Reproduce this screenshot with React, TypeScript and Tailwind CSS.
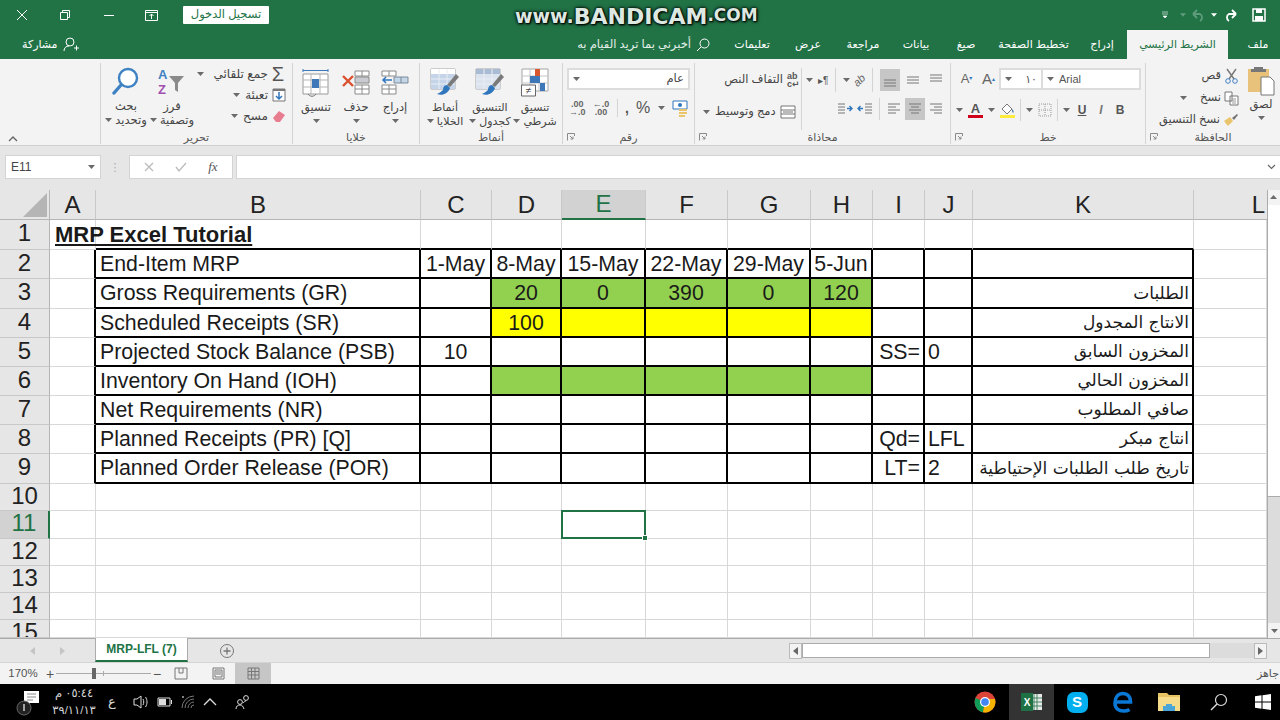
import { ReactNode } from "react";

const ar = "font-['Liberation_Sans','DejaVu_Sans',sans-serif]";

function Caret({ color = "#6a6a6a" }: { color?: string }) {
  return (
    <svg width="7" height="4" viewBox="0 0 7 4" className="shrink-0">
      <path d="M0 0h7L3.5 4z" fill={color} />
    </svg>
  );
}

function Launcher() {
  return (
    <svg width="8" height="8" viewBox="0 0 8 8" className="shrink-0">
      <path d="M0.5 7.5V0.5H7.5V3M3 3l3 3M6 3.5V6H3.5" fill="none" stroke="#8a8a8a" strokeWidth="1" />
    </svg>
  );
}

function Sep() {
  return <div className="w-px self-stretch bg-[#d4d4d4] shrink-0" />;
}

function Group({ width, label, launcher, children }: { width: string; label: string; launcher?: boolean; children: ReactNode }) {
  return (
    <div className={`${width} shrink-0 flex flex-col border-l border-[#d4d4d4] mb-[1px] mt-[4px]`}>
      <div className="flex-1 min-h-0 flex">{children}</div>
      <div className="h-[14px] flex items-center px-[4px] relative">
        {launcher && <Launcher />}
        <span className="flex-1 text-center text-[11px] leading-none text-[#555]">{label}</span>
        {launcher && <span className="w-[8px]" />}
      </div>
    </div>
  );
}

function BigButton({ icon, lines, className = "" }: { icon: ReactNode; lines: [string, string?]; className?: string }) {
  return (
    <div className={`flex flex-col items-center text-[11.5px] leading-[14px] text-[#444] ${className}`}>
      <div className="h-[34px] mt-[1px] flex items-center justify-center">{icon}</div>
      <span className="whitespace-nowrap">{lines[0]}</span>
      <span className="flex items-center gap-[3px] whitespace-nowrap h-[14px]">
        <Caret />
        {lines[1]}
      </span>
    </div>
  );
}

function TableGridIcon() {
  return (
    <svg width="28" height="30" viewBox="0 0 28 30">
      <path d="M1 6h25v20H1z" fill="#fff" stroke="#9a9a9a" />
      <path d="M9 6v20M18 6v20M1 12h25M1 19h25" stroke="#b5b5b5" />
      <path d="M10 11h7v9h-7z" fill="#3f78b8" />
      <path d="M1 2.5h25M1 1v3M26 1v3" stroke="#3f78b8" />
      <path d="M6 26c2 3 6 3 8 0" fill="none" stroke="#777" />
    </svg>
  );
}

function DeleteCellIcon() {
  return (
    <svg width="30" height="28" viewBox="0 0 30 28">
      <path d="M14 2h14v5H14zM14 16h14v9H14z" fill="#fff" stroke="#8a8a8a" />
      <path d="M21 2v5M21 16v9M14 20h14" stroke="#8a8a8a" />
      <path d="M14 8h14v6H14z" fill="#c8ccd0" stroke="#8a8a8a" />
      <path d="M2 7l10 10M12 7L2 17" stroke="#d9502e" strokeWidth="2.4" />
    </svg>
  );
}

function InsertCellIcon() {
  return (
    <svg width="28" height="28" viewBox="0 0 28 28">
      <path d="M1 2h14v5H1zM1 16h14v9H1z" fill="#fff" stroke="#8a8a8a" />
      <path d="M8 2v5M8 16v9M1 20h14" stroke="#8a8a8a" />
      <path d="M13 8h14v6H13z" fill="#c3d5e8" stroke="#7a8a9a" />
      <path d="M20 8v6" stroke="#7a8a9a" />
      <path d="M11 11H2M5 8l-3 3 3 3" fill="none" stroke="#2f76bd" strokeWidth="1.5" />
    </svg>
  );
}

function CondFormatIcon() {
  return (
    <svg width="28" height="30" viewBox="0 0 28 30">
      <path d="M1 1h26v22H1z" fill="#fff" stroke="#a5a5a5" />
      <path d="M9 1v22M18 1v22M1 8h26M1 15h26" stroke="#c5c5c5" />
      <path d="M14 1h5v7h-5z" fill="#d9572f" />
      <path d="M9 8h10v7H9z" fill="#3f78b8" />
      <path d="M19 15h5v8h-5z" fill="#3f78b8" />
      <path d="M0.5 17h14v11H0.5z" fill="#fff" stroke="#666" />
      <text x="7.5" y="26" textAnchor="middle" fontSize="10" fill="#444" fontFamily="Liberation Sans">≠</text>
    </svg>
  );
}

function TableStyleIcon({ fill, head }: { fill: string; head: string }) {
  return (
    <svg width="30" height="30" viewBox="0 0 30 30">
      <path d="M1 1h24v20H1z" fill="#fff" stroke="#a5a5a5" />
      <path d="M1 1h24v5H1z" fill={head} />
      <path d="M1 6h24v15H1z" fill={fill} />
      <path d="M9 1v20M17 1v20M1 11h24M1 16h24" stroke="#e8eef5" />
      <path d="M26 6l3 3-9 10-3-2z" fill="#7a7a7a" />
      <path d="M17 17c-3 0-4 3-4 5-2 2-4 3-6 4 5 2 11 0 13-6z" fill="#2f76bd" />
    </svg>
  );
}

function AccountingIcon() {
  return (
    <svg width="16" height="17" viewBox="0 0 16 17">
      <path d="M1 1h14v8H1z" fill="#fff" stroke="#2f76bd" />
      <circle cx="8" cy="5" r="2" fill="#2f76bd" />
      <path d="M7 9h8v2H7zM7 12h8v2H7zM7 15h6v2H7z" fill="#e9c46a" />
    </svg>
  );
}

function AlignLines({ kind }: { kind: "top" | "mid" | "bot" | "left" | "center" | "right" | "indentL" | "indentR" }) {
  const rows: Record<string, string> = {
    top: "M2 3h12M2 6h12M2 9h12",
    mid: "M2 5h12M2 8h12M2 11h12",
    bot: "M2 8h12M2 11h12M2 14h12",
    left: "M2 3h12M2 6h8M2 9h12M2 12h8",
    center: "M2 3h12M4 6h8M2 9h12M4 12h8",
    right: "M2 3h12M6 6h8M2 9h12M6 12h8",
    indentL: "M8 3h7M8 6h7M8 9h7M8 12h7M1 7.5h5",
    indentR: "M1 3h7M1 6h7M1 9h7M1 12h7M15 7.5h-5",
  };
  return (
    <svg width="16" height="16" viewBox="0 0 16 16">
      <path d={rows[kind]} stroke="#777" strokeWidth="1" fill="none" />
      {kind === "indentL" && <path d="M1 7.5h5M3.5 5L1 7.5 3.5 10" stroke="#2f76bd" strokeWidth="1.4" fill="none" />}
      {kind === "indentR" && <path d="M15 7.5h-5M12.5 5L15 7.5 12.5 10" stroke="#2f76bd" strokeWidth="1.4" fill="none" />}
    </svg>
  );
}

function Ribbon() {
  return (
    <div className={`h-[86px] shrink-0 bg-[#f3f3f3] flex ${ar}`}>
      <div className="w-[100px] shrink-0 flex flex-col justify-end pl-[8px] pb-[3px]">
        <svg width="10" height="6" viewBox="0 0 10 6"><path d="M1 5l4-4 4 4" fill="none" stroke="#666" strokeWidth="1.4" /></svg>
      </div>

      {/* تحرير */}
      <Group width="w-[192px]" label="تحرير">
        <div className="flex pl-[6px] pt-[1px]">
          <BigButton
            className="w-[38px]"
            lines={["بحث", "وتحديد"]}
            icon={
              <svg width="28" height="30" viewBox="0 0 28 30">
                <circle cx="16" cy="11" r="9" fill="#fff" stroke="#3f82c4" strokeWidth="2.4" />
                <path d="M9 18L2 26" stroke="#3f82c4" strokeWidth="3.4" strokeLinecap="round" />
              </svg>
            }
          />
          <BigButton
            className="w-[46px] ml-[4px]"
            lines={["فرز", "وتصفية"]}
            icon={
              <svg width="30" height="30" viewBox="0 0 30 30">
                <text x="1" y="12" fontSize="13" fontWeight="700" fill="#3f82c4" fontFamily="Liberation Sans">A</text>
                <text x="1" y="27" fontSize="13" fontWeight="700" fill="#a050b0" fontFamily="Liberation Sans">Z</text>
                <path d="M12 9h15l-6 7v9l-3-2v-7z" fill="#8a8a8a" />
              </svg>
            }
          />
        </div>
        <div className="flex-1 flex flex-col items-end gap-[3px] pr-[6px] pt-[2px] text-[12px] text-[#444] leading-[18px]">
          <div className="flex items-center gap-[2px] h-[18px]">
            <Caret />
            <span className="ml-[8px]">جمع تلقائي</span>
            <span className="text-[20px] leading-none text-[#555] w-[16px] text-center">Σ</span>
          </div>
          <div className="flex items-center gap-[2px] h-[18px]">
            <Caret />
            <span className="ml-[3px]">تعبئة</span>
            <svg width="14" height="14" viewBox="0 0 14 14" className="ml-[2px]">
              <path d="M1 1h12v12H1z" fill="#fff" stroke="#777" />
              <path d="M1 1h12v2H1z" fill="#777" />
              <path d="M7 4v7M4 8l3 3 3-3" fill="none" stroke="#2f76bd" strokeWidth="1.5" />
            </svg>
          </div>
          <div className="flex items-center gap-[2px] h-[18px]">
            <Caret />
            <span className="ml-[3px]">مسح</span>
            <svg width="14" height="14" viewBox="0 0 14 14" className="ml-[2px]">
              <path d="M1 9l6-7 6 4-5 7H4z" fill="#e77d8f" />
            </svg>
          </div>
        </div>
      </Group>

      {/* خلايا */}
      <Group width="w-[127px]" label="خلايا">
        <div className="flex w-full justify-between pl-[3px] pr-[5px] pt-[2px]">
          <BigButton className="w-[40px]" lines={["تنسيق"]} icon={<TableGridIcon />} />
          <BigButton className="w-[38px]" lines={["حذف"]} icon={<DeleteCellIcon />} />
          <BigButton className="w-[38px]" lines={["إدراج"]} icon={<InsertCellIcon />} />
        </div>
      </Group>

      {/* أنماط */}
      <Group width="w-[143px]" label="أنماط">
        <div className="flex w-full justify-between pl-[3px] pr-[5px] pt-[2px]">
          <BigButton className="w-[44px] text-[11px]" lines={["أنماط", "الخلايا"]} icon={<TableStyleIcon fill="#c5d4e8" head="#fff" />} />
          <BigButton className="w-[44px] text-[11px]" lines={["التنسيق", "كجدول"]} icon={<TableStyleIcon fill="#dbe3ee" head="#a9bcd4" />} />
          <BigButton className="w-[44px] text-[11px]" lines={["تنسيق", "شرطي"]} icon={<CondFormatIcon />} />
        </div>
      </Group>

      {/* رقم */}
      <Group width="w-[132px]" label="رقم" launcher>
        <div className="flex flex-col w-full px-[4px] pt-[5px]">
          <div className="h-[22px] bg-white border-2 border-[#dcdcdc] flex items-center justify-between px-[4px] text-[11.5px] text-[#444]">
            <Caret />
            <span>عام</span>
          </div>
          <div className="flex items-center justify-between mt-[9px] h-[18px] text-[#555] px-[2px]">
            <span className="text-[9px] leading-[8px] text-center font-bold text-[#666]">.00<br />→.0</span>
            <span className="text-[9px] leading-[8px] text-center font-bold text-[#666]">←.0<br />.00</span>
            <Sep />
            <span className="text-[14px] font-bold leading-none">,</span>
            <span className="text-[16px] leading-none">%</span>
            <Caret />
            <AccountingIcon />
          </div>
        </div>
      </Group>

      {/* محاذاة */}
      <Group width="w-[256px]" label="محاذاة" launcher>
        <div className="flex w-full pt-[5px] pl-[4px] text-[11.5px] text-[#444]">
          <div className="w-[102px] flex flex-col gap-[9px] pl-[4px]">
            <div className="h-[24px] flex items-center justify-end gap-[4px]">
              <span>التفاف النص</span>
              <span className="text-[9px] leading-[8px] text-[#555] font-bold w-[14px]">ab<br />c↵</span>
            </div>
            <div className="h-[22px] flex items-center gap-[4px]">
              <Caret />
              <span className="ml-[1px] whitespace-nowrap">دمج وتوسيط</span>
              <svg width="16" height="14" viewBox="0 0 16 14" className="shrink-0"><path d="M1 1h14v12H1zM1 5h14M1 9h14M3 7h10" fill="#fff" stroke="#777" /></svg>
            </div>
          </div>
          <Sep />
          <div className="flex-1 flex flex-col gap-[6px] px-[4px]">
            <div className="flex items-center justify-between h-[24px]">
              <span className="flex items-center gap-[5px]"><Caret /><span className="text-[10px] text-[#555]">▸¶</span></span>
              <Sep />
              <span className="flex items-center gap-[3px]"><Caret /><span className="text-[11px] italic text-[#666] -rotate-45">ab</span></span>
              <Sep />
              <span className="flex gap-[3px] items-center">
                <span className="bg-[#c6c6c6] w-[20px] h-[22px] flex items-center justify-center"><AlignLines kind="bot" /></span>
                <span className="w-[20px] flex justify-center"><AlignLines kind="mid" /></span>
                <span className="w-[20px] flex justify-center"><AlignLines kind="top" /></span>
              </span>
            </div>
            <div className="flex items-center justify-end gap-[2px] h-[22px]">
              <span className="flex gap-[4px]"><AlignLines kind="indentR" /><AlignLines kind="indentL" /></span>
              <span className="ml-[4px] self-stretch flex"><Sep /></span>
              <span className="flex gap-[1px] items-center ml-[2px]">
                <span className="w-[20px] flex justify-center"><AlignLines kind="left" /></span>
                <span className="bg-[#c6c6c6] w-[20px] h-[22px] flex items-center justify-center"><AlignLines kind="center" /></span>
                <span className="w-[20px] flex justify-center"><AlignLines kind="right" /></span>
              </span>
            </div>
          </div>
        </div>
      </Group>

      {/* خط */}
      <Group width="w-[195px]" label="خط" launcher>
        <div className="flex flex-col w-full pt-[5px] pl-[5px] pr-[4px] gap-[9px]">
          <div className="flex items-center h-[22px]">
            <span className="text-[13px] text-[#666] w-[21px] text-center">A<sup className="text-[6px] text-[#2f76bd]">▾</sup></span>
            <span className="text-[15px] text-[#666] w-[21px] text-center ml-[1px]">A<sup className="text-[6px] text-[#2f76bd]">▴</sup></span>
            <div className="h-[22px] w-[44px] bg-white border-2 border-[#dcdcdc] flex items-center justify-between px-[4px] text-[11px] text-[#555]">
              <Caret />
              <span>١٠</span>
            </div>
            <div className="h-[22px] flex-1 bg-white border-2 border-l-0 border-[#dcdcdc] flex items-center gap-[5px] px-[4px] text-[11px] text-[#555]">
              <Caret />
              <span className="font-['Liberation_Sans']">Arial</span>
            </div>
          </div>
          <div className="flex items-center h-[22px] gap-[5px]">
            <Caret />
            <span className="flex flex-col items-center leading-none">
              <span className="text-[13px] font-bold text-[#555] leading-[12px]">A</span>
              <span className="w-[15px] h-[3px] bg-[#d0021b]" />
            </span>
            <Caret />
            <span className="flex flex-col items-center leading-none">
              <svg width="15" height="12" viewBox="0 0 15 12"><path d="M2 6l5-5 5 5-5 5z" fill="#fff" stroke="#777" /><path d="M12 6c2 2 2 3 1 4-1-1-1-2-1-4z" fill="#4a7fb5" /></svg>
              <span className="w-[15px] h-[3px] bg-[#ffeb3b]" />
            </span>
            <Sep />
            <Caret />
            <svg width="14" height="14" viewBox="0 0 14 14"><path d="M1 1h12v12H1zM7 1v12M1 7h12" fill="none" stroke="#9a9a9a" strokeDasharray="1 1" /></svg>
            <Sep />
            <Caret />
            <span className="text-[12px] font-bold underline text-[#555] w-[14px] text-center">U</span>
            <span className="text-[12px] font-bold italic text-[#777] w-[14px] text-center">I</span>
            <span className="text-[12px] font-bold text-[#555] w-[14px] text-center">B</span>
          </div>
        </div>
      </Group>

      {/* الحافظة */}
      <Group width="w-[135px]" label="الحافظة" launcher>
        <div className="flex w-full text-[11.5px] text-[#444] leading-none">
          <div className="flex-1 flex flex-col items-end pt-[4px] gap-[4px] pr-[3px]">
            <div className="h-[18px] flex items-center gap-[3px]">
              <span>قص</span>
              <svg width="15" height="16" viewBox="0 0 15 16"><path d="M3 1l7 10M12 1L5 11" stroke="#777" strokeWidth="1.4" /><circle cx="4" cy="13" r="2.3" fill="none" stroke="#3f82c4" /><circle cx="11" cy="13" r="2.3" fill="none" stroke="#3f82c4" /></svg>
            </div>
            <div className="h-[18px] flex items-center gap-[3px]">
              <Caret />
              <span className="ml-[10px]">نسخ</span>
              <svg width="15" height="15" viewBox="0 0 15 15"><path d="M1 1h7v9H1zM6 5h8v9H6z" fill="#fff" stroke="#777" /><path d="M8 8h4M8 10h4M8 12h4" stroke="#999" /></svg>
            </div>
            <div className="h-[18px] flex items-center gap-[3px]">
              <span className="whitespace-nowrap">نسخ التنسيق</span>
              <svg width="16" height="14" viewBox="0 0 16 14"><path d="M1 8l6-4 3 4-5 5z" fill="#e9c46a" /><path d="M9 5l5-4 1 1-4 5z" fill="#777" /></svg>
            </div>
          </div>
          <div className="w-[38px] flex flex-col items-center pt-[1px]">
            <svg width="28" height="32" viewBox="0 0 28 32">
              <path d="M1 5h21v23H1z" fill="#e8c27a" />
              <path d="M7 3h9v2h3v3H4V5h3z" fill="#777" />
              <path d="M14 13h9l4 4v14H14z" fill="#fff" stroke="#777" />
            </svg>
            <span className="mt-[3px]">لصق</span>
            <span className="mt-[5px]"><Caret /></span>
          </div>
        </div>
      </Group>
    </div>
  );
}

const columns = ["A", "B", "C", "D", "E", "F", "G", "H", "I", "J", "K", "L"];
const rowHeights = "grid-rows-[30px_30px_29px_30px_29px_29px_29px_29px_29px_30px_27px_28px_27px_27px_27px_18px]";

type Cell = { text?: string; align?: "left" | "center" | "right"; bg?: string; rtl?: boolean };

const sheet: Record<number, Record<string, Cell>> = {
  2: {
    B: { text: "End-Item MRP" }, C: { text: "1-May", align: "center" }, D: { text: "8-May", align: "center" },
    E: { text: "15-May", align: "center" }, F: { text: "22-May", align: "center" }, G: { text: "29-May", align: "center" }, H: { text: "5-Jun", align: "center" },
  },
  3: {
    B: { text: "Gross Requirements (GR)" }, D: { text: "20", align: "center", bg: "bg-[#92d050]" }, E: { text: "0", align: "center", bg: "bg-[#92d050]" },
    F: { text: "390", align: "center", bg: "bg-[#92d050]" }, G: { text: "0", align: "center", bg: "bg-[#92d050]" }, H: { text: "120", align: "center", bg: "bg-[#92d050]" },
    K: { text: "الطلبات", rtl: true },
  },
  4: {
    B: { text: "Scheduled Receipts (SR)" }, D: { text: "100", align: "center", bg: "bg-[#ffff00]" }, E: { bg: "bg-[#ffff00]" }, F: { bg: "bg-[#ffff00]" }, G: { bg: "bg-[#ffff00]" }, H: { bg: "bg-[#ffff00]" },
    K: { text: "الانتاج المجدول", rtl: true },
  },
  5: { B: { text: "Projected Stock Balance (PSB)" }, C: { text: "10", align: "center" }, I: { text: "SS=", align: "right" }, J: { text: "0" }, K: { text: "المخزون السابق", rtl: true } },
  6: { B: { text: "Inventory On Hand (IOH)" }, D: { bg: "bg-[#92d050]" }, E: { bg: "bg-[#92d050]" }, F: { bg: "bg-[#92d050]" }, G: { bg: "bg-[#92d050]" }, H: { bg: "bg-[#92d050]" }, K: { text: "المخزون الحالي", rtl: true } },
  7: { B: { text: "Net Requirements (NR)" }, K: { text: "صافي المطلوب", rtl: true } },
  8: { B: { text: "Planned Receipts (PR) [Q]" }, I: { text: "Qd=", align: "right" }, J: { text: "LFL" }, K: { text: "انتاج مبكر", rtl: true } },
  9: { B: { text: "Planned Order Release (POR)" }, I: { text: "LT=", align: "right" }, J: { text: "2" }, K: { text: "تاريخ طلب الطلبات الإحتياطية", rtl: true } },
};

function SheetCell({ col, row }: { col: string; row: number }) {
  const inTable = row >= 2 && row <= 9 && col !== "A" && col !== "L";
  const cell = sheet[row]?.[col];
  const isTitle = col === "A" && row === 1;
  const rightBlack = inTable || (col === "A" && row >= 2 && row <= 9);
  const bottomBlack = (row === 1 || inTable) && col !== "A" && col !== "L";
  const align = cell?.align === "center" ? "justify-center" : cell?.align === "right" || cell?.rtl ? "justify-end" : "justify-start";
  return (
    <div
      className={`min-w-0 flex items-center whitespace-nowrap text-[21.3px] leading-[24px] text-[#1a1a1a] font-['Liberation_Sans'] ${
        col === "B" ? "pl-[4px] pr-[3px]" : "px-[3px]"
      } ${cell?.rtl ? "pb-[1px]" : ""} ${isTitle ? "overflow-visible" : "overflow-hidden"} ${align} ${cell?.bg ?? ""} ${
        rightBlack ? "border-r-2 border-r-black" : "border-r border-r-[#d8d8d8]"
      } ${bottomBlack ? "border-b-2 border-b-black" : "border-b border-b-[#d8d8d8]"}`}
    >
      {cell?.rtl ? <span dir="rtl" className="text-[17px] font-['DejaVu_Sans']">{cell.text}</span> : cell?.text}
      {isTitle && <span className="ml-[2px] text-[22px] font-bold underline">MRP Excel Tutorial</span>}
    </div>
  );
}

function Sheet() {
  const rows = Array.from({ length: 15 }, (_, i) => i + 1);
  return (
    <div className="flex-1 min-h-0 flex bg-white">
      <div className={`flex-1 min-w-0 grid grid-cols-[50px_46px_325px_71px_70px_84px_82px_83px_62px_52px_48px_221px_73px] ${rowHeights}`}>
        <div className="bg-[#e6e6e6] border-r border-b border-[#b5b5b5] relative overflow-hidden">
          <div className="absolute right-[2px] bottom-[2px] w-0 h-0 border-l-[24px] border-l-transparent border-b-[24px] border-b-[#b5b5b5]" />
        </div>
        {columns.map((c) => (
          <div
            key={c}
            className={`flex items-center justify-center text-[24px] font-['Liberation_Sans'] border-r border-[#c8c8c8] ${
              c === "E" ? "bg-[#d2d2d2] text-[#217346] border-b-2 border-b-[#217346]" : "bg-[#e6e6e6] text-[#222] border-b border-b-[#b5b5b5]"
            } ${c === "L" ? "justify-end pr-[2px] border-r-0" : ""}`}
          >
            {c}
          </div>
        ))}
        {rows.map((r) => (
          <div key={r} className="contents">
            <div
              className={`flex justify-center text-[24px] leading-[22px] font-['Liberation_Sans'] border-b border-[#c8c8c8] ${
                r === 15 ? "items-start pt-[1px] overflow-hidden" : "items-center pb-[3px]"
              } ${r === 11 ? "bg-[#d2d2d2] text-[#217346] border-r-2 border-r-[#217346]" : "bg-[#e6e6e6] text-[#222] border-r border-r-[#b5b5b5]"}`}
            >
              {r}
            </div>
            {columns.map((c) => (
              <div key={c} className="contents">
                {r === 11 && c === "E" ? (
                  <div className="relative border-2 border-[#217346] -mt-px -ml-px">
                    <div className="absolute -right-[4px] -bottom-[4px] w-[6px] h-[6px] bg-[#217346] border border-white" />
                  </div>
                ) : (
                  <SheetCell col={c} row={r} />
                )}
              </div>
            ))}
          </div>
        ))}
      </div>
      <div className="w-[13px] shrink-0 bg-[#dcdcdc] border-l border-[#ababab] flex flex-col">
        <div className="h-[15px] bg-[#f3f3f3] flex items-center justify-center rotate-180"><Caret /></div>
        <div className="h-[292px] bg-white border-b border-[#ababab]" />
        <div className="flex-1" />
        <div className="h-[15px] bg-[#f3f3f3] flex items-center justify-center"><Caret /></div>
      </div>
    </div>
  );
}

function Taskbar() {
  return (
    <div className="h-[36px] shrink-0 bg-black flex items-center justify-between text-[#d5d5d5] font-['Liberation_Sans','DejaVu_Sans',sans-serif]">
      <div className="flex items-center pl-[16px]">
        <div className="relative w-[30px] h-[30px]">
          <svg width="30" height="30" viewBox="0 0 30 30">
            <path d="M8 4h15v12H14l-2 3v-3H8z" fill="#fff" />
            <path d="M11 7h9M11 10h9M11 13h6" stroke="#888" />
            <circle cx="8" cy="21" r="7" fill="#222" stroke="#666" />
            <path d="M8 17v7" stroke="#ccc" strokeWidth="1.5" />
          </svg>
        </div>
        <div className="w-[40px] ml-[8px] flex flex-col items-center text-[11.5px] leading-[17px] whitespace-nowrap">
          <span>٠٥:٤٤ م</span>
          <span>٣٩/١١/١٣</span>
        </div>
        <span className="text-[13px] ml-[14px] w-[16px]">ع</span>
        <svg width="18" height="16" viewBox="0 0 18 16" className="ml-[8px]"><path d="M2 5h3l4-3v12l-4-3H2z" fill="none" stroke="#ddd" /><path d="M11 5c1 2 1 4 0 6M13.500 3c2 3 2 7 0 10" stroke="#ddd" fill="none" /></svg>
        <svg width="16" height="10" viewBox="0 0 16 10" className="ml-[7px]"><path d="M1 1h12v8H1z" fill="none" stroke="#ddd" /><path d="M2 2h7v6H2z" fill="#ddd" /><path d="M14 3h1v4h-1z" fill="#ddd" /></svg>
        <svg width="16" height="16" viewBox="0 0 16 16" className="ml-[7px]"><path d="M2 14a12 12 0 0 1 12-12M5 14a9 9 0 0 1 9-9M8 14a6 6 0 0 1 6-6M11 14a3 3 0 0 1 3-3" fill="none" stroke="#777" /><path d="M2 3l1-1 1 1-1 1z" fill="#fff" /></svg>
        <svg width="14" height="8" viewBox="0 0 14 8" className="ml-[7px]"><path d="M1 7l6-6 6 6" fill="none" stroke="#ddd" strokeWidth="1.3" /></svg>
        <svg width="16" height="16" viewBox="0 0 16 16" className="ml-[18px]"><circle cx="5" cy="8" r="2.4" fill="none" stroke="#ddd" /><circle cx="11" cy="4" r="2.4" fill="none" stroke="#ddd" /><path d="M1 15c0-3 2-4 4-4s3 1 4 4M8 9c1-1 2-2 3-2" fill="none" stroke="#ddd" /></svg>
      </div>
      <div className="flex items-center h-full">
        <div className="w-[44px] h-full flex items-center justify-center pr-[4px]">
          <svg width="22" height="22" viewBox="0 0 22 22">
            <circle cx="11" cy="11" r="10.500" fill="#db4437" />
            <path d="M11 11L1.500 7A10.500 10.500 0 0 0 9 21.300z" fill="#0f9d58" />
            <path d="M11 11l-2 10.300A10.500 10.500 0 0 0 21 8H11z" fill="#f4b400" />
            <circle cx="11" cy="11" r="5" fill="#fff" />
            <circle cx="11" cy="11" r="3.800" fill="#4285f4" />
          </svg>
        </div>
        <div className="w-[45px] h-full bg-[#333] flex items-center justify-center">
          <svg width="22" height="20" viewBox="0 0 22 20">
            <path d="M10 2h11v16H10z" fill="#e8e8e8" />
            <path d="M13 2v16M16 2v16M10 6h11M10 10h11M10 14h11" stroke="#217346" strokeWidth="0.8" />
            <path d="M0 1h12v18H0z" fill="#1e7145" />
            <text x="6" y="14" textAnchor="middle" fontSize="10" fontWeight="700" fill="#fff" fontFamily="Liberation Sans">X</text>
          </svg>
        </div>
        <div className="w-[46px] h-full flex items-center justify-center">
          <div className="w-[21px] h-[21px] rounded-[7px] bg-[#00aff0] flex items-center justify-center text-white font-bold text-[15px]">S</div>
        </div>
        <div className="w-[46px] h-full flex items-center justify-center">
          <svg width="20" height="22" viewBox="0 0 20 22">
            <path d="M2 11h15.500c0-5.500-3-8.500-7.500-8.500S2 6 2 12c0 5.500 4 8 8.500 8 2.500 0 4.500-.6 6-1.600" fill="none" stroke="#0a78d7" strokeWidth="3.600" />
          </svg>
        </div>
        <div className="w-[46px] h-full flex items-center justify-center">
          <svg width="22" height="18" viewBox="0 0 22 18">
            <path d="M0 0h9l2 2h11v16H0z" fill="#e7c463" />
            <path d="M0 4h22v14H0z" fill="#f5dc8b" />
            <path d="M5 13h12v5H5z" fill="#4aa6d8" />
            <path d="M8 11h6v3H8z" fill="#4aa6d8" />
          </svg>
        </div>
        <div className="w-[54px] h-full flex items-center justify-center">
          <svg width="18" height="18" viewBox="0 0 18 18"><circle cx="11" cy="7" r="5.500" fill="none" stroke="#ddd" strokeWidth="1.200" /><path d="M7 11l-6 6" stroke="#ddd" strokeWidth="1.400" /></svg>
        </div>
        <div className="w-[34px] h-full flex items-center justify-center">
          <svg width="16" height="16" viewBox="0 0 16 16"><path d="M0 2.300l6.500-1v6.200H0zM7.500 1.200L16 0v7.500H7.500zM0 8.500h6.500v6.200l-6.500-1zM7.500 8.500H16V16l-8.500-1.200z" fill="#fff" /></svg>
        </div>
      </div>
    </div>
  );
}

export default function App() {
  return (
    <div className={`w-[1280px] h-[720px] overflow-hidden relative flex flex-col ${ar}`}>
      {/* title bar */}
      <div className="h-[30px] shrink-0 bg-[#217346] flex items-center justify-between text-white">
        <div className="flex items-center">
          <div className="w-[43px] flex justify-center">
            <svg width="12" height="12" viewBox="0 0 12 12"><path d="M1 1l10 10M11 1L1 11" stroke="#fff" /></svg>
          </div>
          <div className="w-[44px] flex justify-center">
            <svg width="10" height="10" viewBox="0 0 10 10"><path d="M0.500 2.500h7v7h-7zM2.500 2.500v-2h7v7h-2" fill="none" stroke="#fff" /></svg>
          </div>
          <div className="w-[43px] flex justify-center">
            <div className="w-[10px] h-px bg-white" />
          </div>
          <div className="w-[43px] flex justify-center">
            <svg width="13" height="11" viewBox="0 0 13 11"><path d="M0.500 0.500h12v10h-12zM0.500 2.500h12" fill="none" stroke="#fff" /><path d="M6.500 4v5M4.500 6l2-2 2 2" fill="none" stroke="#fff" /></svg>
          </div>
          <div className="w-[86px] h-[18px] ml-[10px] bg-white rounded-[1px] flex items-center justify-center text-[11.5px] text-[#217346]">
            تسجيل الدخول
          </div>
        </div>
        <div className="flex items-center">
          <svg width="8" height="8" viewBox="0 0 8 8" className="mr-[11px]"><path d="M1 1h6M1 3h6M2 5h4l-2 2z" fill="#fff" stroke="#fff" strokeWidth="0.600" /></svg>
          <svg width="6" height="4" viewBox="0 0 7 4" className="mr-[5px]"><path d="M0 0h7L3.500 4z" fill="#5e9c7c" /></svg>
          <svg width="15" height="13" viewBox="0 0 15 13" className="mr-[5px]"><path d="M2 5l4-4M2 5l4 4M2 5h7a4 4 0 0 1 0 7" fill="none" stroke="#5e9c7c" strokeWidth="1.800" /></svg>
          <svg width="6" height="4" viewBox="0 0 7 4" className="mr-[6px]"><path d="M0 0h7L3.500 4z" fill="#fff" /></svg>
          <svg width="15" height="13" viewBox="0 0 15 13" className="mr-[14px]"><path d="M13 5L9 1M13 5L9 9M13 5H6a4 4 0 0 0 0 7" fill="none" stroke="#fff" strokeWidth="1.800" /></svg>
          <svg width="14" height="14" viewBox="0 0 14 14" className="mr-[14px]"><path d="M1 1h12v12H1z" fill="none" stroke="#fff" strokeWidth="1.500" /><path d="M4 1h6v4H4zM3 8h8v5H3z" fill="#fff" /></svg>
        </div>
      </div>

      {/* tabs */}
      <div className="h-[29px] shrink-0 bg-[#217346] flex items-stretch justify-between text-white text-[11px]">
        <div className="flex items-center pl-[22px] gap-[5px]">
          <span>مشاركة</span>
          <svg width="16" height="15" viewBox="0 0 16 15"><circle cx="7" cy="5" r="4" fill="none" stroke="#fff" /><path d="M1 14c0-3 2-5 5-5M11 11h5M13.500 8.500v5" fill="none" stroke="#fff" /></svg>
        </div>
        <div className="flex items-stretch">
          <div className="flex items-center gap-[5px] mr-[14px] text-[11.5px] text-[#e3efe8]">
            <span>أخبرني بما تريد القيام به</span>
            <svg width="14" height="14" viewBox="0 0 14 14"><circle cx="8.500" cy="5.500" r="4.500" fill="none" stroke="#fff" /><path d="M5 9l-4 4" stroke="#fff" /></svg>
          </div>
          <span className="w-[56px] flex items-center justify-center">تعليمات</span>
          <span className="w-[56px] flex items-center justify-center">عرض</span>
          <span className="w-[54px] flex items-center justify-center">مراجعة</span>
          <span className="w-[52px] flex items-center justify-center">بيانات</span>
          <span className="w-[48px] flex items-center justify-center">صيغ</span>
          <span className="w-[87px] flex items-center justify-center">تخطيط الصفحة</span>
          <span className="w-[50px] flex items-center justify-center">إدراج</span>
          <span className="w-[101px] flex items-center justify-center bg-[#f3f3f3] text-[#217346]">الشريط الرئيسي</span>
          <span className="w-[52px] flex items-center justify-center pl-[8px]">ملف</span>
        </div>
      </div>

      <Ribbon />

      {/* formula bar */}
      <div className="h-[45px] shrink-0 bg-[#e6e6e6] border-t border-[#cfcfcf] pt-[9px]">
        <div className="h-[24px] flex items-stretch">
          <div className="w-[96px] ml-[5px] bg-white border border-[#d4d4d4] flex items-center justify-between px-[5px] text-[12px] text-[#444] font-['Liberation_Sans']">
            <span>E11</span>
            <Caret />
          </div>
          <div className="w-[28px] flex items-center justify-center text-[#aaa] text-[11px]">⋮</div>
          <div className="w-[104px] bg-white border border-[#d4d4d4] flex items-center justify-around px-[4px] text-[#bbb]">
            <svg width="10" height="10" viewBox="0 0 10 10"><path d="M1 1l8 8M9 1L1 9" stroke="#bbb" strokeWidth="1.300" /></svg>
            <svg width="12" height="10" viewBox="0 0 12 10"><path d="M1 5l3 4 7-8" fill="none" stroke="#bbb" strokeWidth="1.300" /></svg>
            <span className="font-['Liberation_Serif'] italic text-[13px] text-[#555]">fx</span>
          </div>
          <div className="flex-1 ml-[3px] bg-white border border-[#d4d4d4] border-r-0 flex items-center justify-end pr-[4px]">
            <svg width="9" height="6" viewBox="0 0 9 6"><path d="M1 1l3.500 3.500L8 1" fill="none" stroke="#666" strokeWidth="1.200" /></svg>
          </div>
        </div>
      </div>

      <Sheet />

      {/* sheet tabs + h scroll */}
      <div className="h-[24px] shrink-0 bg-[#e6e6e6] border-t border-[#ababab] flex items-stretch">
        <div className="w-[95px] flex items-center justify-around px-[18px]">
          <svg width="5" height="8" viewBox="0 0 5 8"><path d="M5 0v8L0 4z" fill="#c4c4c4" /></svg>
          <svg width="5" height="8" viewBox="0 0 5 8"><path d="M0 0v8l5-4z" fill="#c4c4c4" /></svg>
        </div>
        <div className="w-[93px] bg-white border-x border-[#ababab] border-b-2 border-b-[#217346] -mt-px flex items-center justify-center text-[12px] font-bold text-[#217346] font-['Liberation_Sans']">
          MRP-LFL (7)
        </div>
        <div className="ml-[31px] flex items-center">
          <svg width="16" height="16" viewBox="0 0 16 16"><circle cx="8" cy="8" r="6.500" fill="none" stroke="#777" /><path d="M4.500 8h7M8 4.500v7" stroke="#777" strokeWidth="1.300" /></svg>
        </div>
        <div className="flex-1" />
        <div className="flex items-center pr-[13px]">
          <div className="w-[13px] h-[16px] bg-[#f3f3f3] border border-[#bbb] flex items-center justify-center">
            <svg width="5" height="8" viewBox="0 0 5 8"><path d="M5 0v8L0 4z" fill="#666" /></svg>
          </div>
          <div className="w-[408px] h-[15px] bg-white border border-[#ababab]" />
          <div className="w-[44px] h-[15px] bg-[#dcdcdc]" />
          <div className="w-[13px] h-[16px] bg-[#f3f3f3] border border-[#bbb] flex items-center justify-center">
            <svg width="5" height="8" viewBox="0 0 5 8"><path d="M0 0v8l5-4z" fill="#666" /></svg>
          </div>
        </div>
      </div>

      {/* status bar */}
      <div className="h-[22px] shrink-0 bg-[#f3f3f3] border-t border-[#d4d4d4] flex items-center justify-between text-[11px] text-[#555]">
        <div className="flex items-center h-full">
          <span className="w-[46px] text-center font-['Liberation_Sans'] text-[11.5px]">170%</span>
          <span className="text-[14px] leading-none w-[8px] text-center">+</span>
          <div className="relative w-[95px] h-px bg-[#aaa] mx-[2px]">
            <div className="absolute left-[36px] -top-[5px] w-[4px] h-[11px] bg-[#666]" />
            <div className="absolute left-[47px] -top-[2px] w-px h-[5px] bg-[#aaa]" />
          </div>
          <span className="text-[14px] leading-none w-[8px] text-center">−</span>
          <div className="w-[40px] flex justify-center">
            <svg width="14" height="13" viewBox="0 0 14 13"><path d="M1 1h12v11H1zM5 1v5h4V1" fill="none" stroke="#777" /></svg>
          </div>
          <div className="w-[34px] flex justify-center">
            <svg width="13" height="13" viewBox="0 0 13 13"><path d="M1 1h11v11H1zM3 3h7v7H3zM4 5h5M4 7h5" fill="none" stroke="#777" /></svg>
          </div>
          <div className="w-[36px] h-full bg-[#c6c6c6] flex justify-center items-center">
            <svg width="13" height="13" viewBox="0 0 13 13"><path d="M1 1h11v11H1zM1 4.500h11M1 8h11M4.500 1v11M8 1v11" fill="none" stroke="#777" /></svg>
          </div>
        </div>
        <span className="pr-[1px]">جاهز</span>
      </div>

      <Taskbar />

      {/* recorder watermark */}
      <div className="absolute left-[515px] top-[4px] h-[24px] flex items-center font-bold text-[#dde8e1] font-['DejaVu_Sans'] [text-shadow:0_0_2px_#000,0_0_4px_#000,1px_1px_2px_#000] whitespace-nowrap">
        <span className="text-[19px]">www.</span>
        <span className="text-[22px]">BANDICAM</span>
        <span className="text-[17px] uppercase">.com</span>
      </div>
    </div>
  );
}
